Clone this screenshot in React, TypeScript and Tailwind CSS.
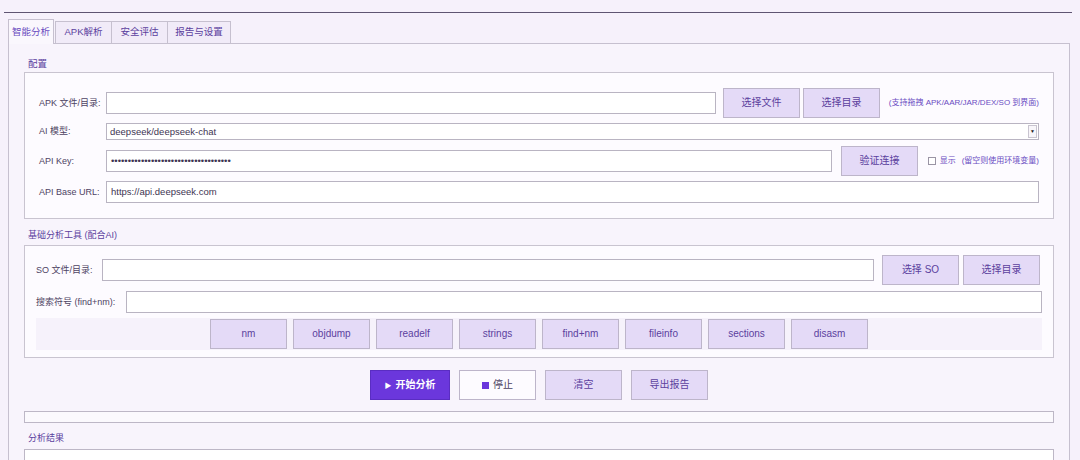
import React from "react";

const Btn = ({
  children,
  className = "",
}: {
  children: React.ReactNode;
  className?: string;
}) => (
  <button
    className={`flex h-[30px] w-[77px] shrink-0 items-center justify-center whitespace-nowrap border border-[#bdb5ca] bg-[#e4daf7] text-[10px] leading-none text-[#5b3f9e] ${className}`}
  >
    {children}
  </button>
);

const Input = ({ value = "", className = "" }: { value?: string; className?: string }) => (
  <div
    className={`flex h-[22px] items-center whitespace-nowrap border border-[#b9b4c2] bg-white px-[4px] text-[9.5px] leading-none text-[#3e3552] ${className}`}
  >
    {value}
  </div>
);

const Label = ({ children, className = "" }: { children: React.ReactNode; className?: string }) => (
  <span className={`shrink-0 whitespace-nowrap text-[9px] leading-none text-[#4d4363] ${className}`}>{children}</span>
);

const tabs = ["智能分析", "APK解析", "安全评估", "报告与设置"];
const tools = ["nm", "objdump", "readelf", "strings", "find+nm", "fileinfo", "sections", "disasm"];

export default function App() {
  return (
    <div
      className="h-[460px] w-[1080px] overflow-hidden bg-[#f6f1fb]"
      style={{ fontFamily: '"Liberation Sans", "Noto Sans CJK SC", sans-serif' }}
    >
      <div className="pt-[12px]">
        <div className="ml-[4px] h-px w-[1068px] bg-[#5f5572]" />
      </div>

      {/* tabs */}
      <div className="ml-[8px] mt-[6px] flex items-end">
        {tabs.map((t, i) => (
          <div
            key={t}
            className={
              i === 0
                ? "relative z-10 -mb-px flex h-[25px] w-[46px] items-center justify-center border border-b-0 border-[#c6c0cf] bg-[#faf7fd] text-[9.5px] text-[#6a4bc0]"
                : `-ml-px flex h-[22px] items-center justify-center border border-b-0 border-[#c6c0cf] bg-[#f1ebf8] text-[9.5px] text-[#5b3f9e] ${
                    i === 3 ? "w-[64px]" : "w-[57px]"
                  } ${i === 1 ? "ml-[1px]" : ""}`
            }
          >
            {t}
          </div>
        ))}
      </div>

      {/* pane */}
      <div className="ml-[8px] h-[420px] w-[1062px] border border-b-0 border-[#c6c0cf] bg-[#f8f4fc] pl-[15px] pr-[15px] pt-[14px]">
        <div className="pl-[4px] text-[9.5px] leading-[11px] text-[#5b3f9e]">配置</div>
        <div className="mt-[3px] flex flex-col gap-[5px] border border-[#c9c4d0] bg-[#fdfbff] px-[14px] pb-[15px] pt-[15px]">
          <div className="flex h-[30px] items-center">
            <Label className="w-[67px]">APK 文件/目录:</Label>
            <Input className="flex-1" />
            <div className="ml-[7px] flex gap-[3px]">
              <Btn>选择文件</Btn>
              <Btn>选择目录</Btn>
            </div>
            <div className="flex w-[159px] shrink-0 justify-end whitespace-nowrap text-[8px] text-[#6a4cc2]">
              (支持拖拽 APK/AAR/JAR/DEX/SO 到界面)
            </div>
          </div>
          <div className="flex h-[17px] items-center">
            <Label className="w-[67px]">AI 模型:</Label>
            <div className="flex h-[17px] flex-1 items-center justify-between border border-[#b9b4c2] bg-white pl-[3px] text-[9.5px] leading-none text-[#3e3552]">
              <span>deepseek/deepseek-chat</span>
              <span className="mr-px flex h-[13px] w-[9px] items-center justify-center border border-[#c9c4d0] bg-[#f8f6fa] text-[5px] text-[#222]">▼</span>
            </div>
          </div>
          <div className="mt-[1px] flex h-[30px] items-center">
            <Label className="w-[67px]">API Key:</Label>
            <Input className="flex-1" value={"•".repeat(36)} />
            <Btn className="ml-[9px]">验证连接</Btn>
            <div className="flex w-[121px] shrink-0 items-center justify-end gap-[4px] whitespace-nowrap text-[8px] text-[#6a4cc2]">
              <span className="h-[8px] w-[8px] border border-[#9a94a4] bg-white" />
              <span>显示</span>
              <span className="ml-[2px]">(留空则使用环境变量)</span>
            </div>
          </div>
          <div className="flex h-[22px] items-center">
            <Label className="w-[67px]">API Base URL:</Label>
            <Input className="flex-1" value="https://api.deepseek.com" />
          </div>
        </div>

        <div className="mt-[11px] pl-[4px] text-[9px] leading-[11px] text-[#5b3f9e]">基础分析工具 (配合AI)</div>
        <div className="mt-[4px] flex flex-col gap-[6px] border border-[#c9c4d0] bg-[#fdfbff] px-[11px] pb-[7px] pt-[9px]">
          <div className="flex h-[30px] items-center">
            <Label className="w-[66px]">SO 文件/目录:</Label>
            <Input className="flex-1" />
            <div className="ml-[8px] mr-[2px] flex gap-[4px]">
              <Btn>选择 SO</Btn>
              <Btn>选择目录</Btn>
            </div>
          </div>
          <div className="flex h-[22px] items-center">
            <Label className="w-[90px]">搜索符号 (find+nm):</Label>
            <Input className="flex-1" />
          </div>
          <div className="-mt-px flex h-[32px] items-center justify-center gap-[6px] bg-[#f6f2fb]">
            {tools.map((t) => (
              <Btn key={t}>{t}</Btn>
            ))}
          </div>
        </div>

        <div className="mt-[12px] flex justify-center gap-[9px]">
          <button className="flex h-[30px] w-[80px] items-center justify-center gap-[4px] border border-[#5a2dc2] bg-[#6b37dc] text-[10px] font-bold leading-none text-white">
            <span className="text-[7px]">▶</span>开始分析
          </button>
          <button className="flex h-[30px] w-[77px] items-center justify-center gap-[4px] border border-[#bdb5ca] bg-[#fdfbff] text-[10px] leading-none text-[#4a4060]">
            <span className="h-[7px] w-[7px] bg-[#6b37dc]" />停止
          </button>
          <Btn>清空</Btn>
          <Btn>导出报告</Btn>
        </div>

        <div className="mt-[11px] h-[12px] border border-[#bdb7c6] bg-[#fbf9fd]" />

        <div className="mt-[10px] pl-[4px] text-[9px] leading-[11px] text-[#5b3f9e]">分析结果</div>
        <div className="mt-[5px] h-[40px] border border-[#bdb7c6] bg-white" />
      </div>
    </div>
  );
}
